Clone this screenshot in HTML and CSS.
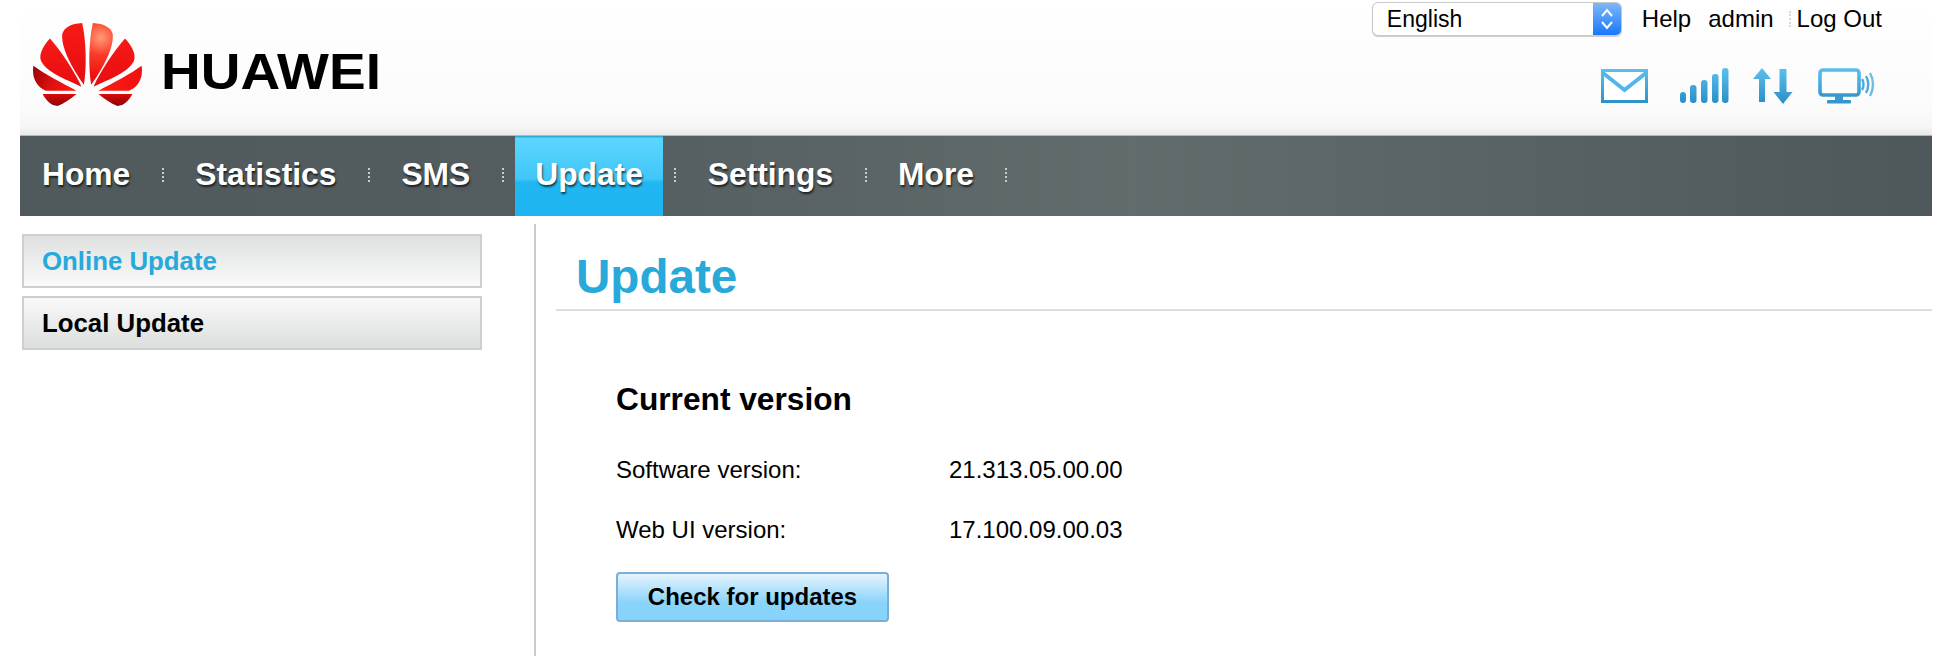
FILE: index.html
```html
<!DOCTYPE html>
<html lang="en">
<head>
  <meta charset="UTF-8">
  <title>Update</title>
  <link rel="stylesheet" href="styles.css">
</head>
<body>
  <div class="page">
    <header class="header">
      <div class="brand">
        <svg class="petals" viewBox="30 30 340 262" aria-hidden="true">
          <defs>
            <radialGradient id="petalA" gradientUnits="userSpaceOnUse" cx="240" cy="80" r="120">
              <stop offset="0" stop-color="#ff9c78"/>
              <stop offset=".45" stop-color="#fb3a26"/>
              <stop offset="1" stop-color="#ee1010"/>
            </radialGradient>
            <linearGradient id="petalB" x1="0" y1="0" x2="0" y2="1">
              <stop offset="0" stop-color="#f81a16"/>
              <stop offset="1" stop-color="#e60c10"/>
            </linearGradient>
            <linearGradient id="petalL" gradientUnits="userSpaceOnUse" x1="35" y1="190" x2="150" y2="225">
              <stop offset="0" stop-color="#9c0606"/>
              <stop offset=".5" stop-color="#e01010"/>
              <stop offset="1" stop-color="#f81414"/>
            </linearGradient>
            <linearGradient id="petalR" gradientUnits="userSpaceOnUse" x1="365" y1="190" x2="250" y2="225">
              <stop offset="0" stop-color="#f01010"/>
              <stop offset="1" stop-color="#fa1a14"/>
            </linearGradient>
            <linearGradient id="petalD" x1="0" y1="0" x2="0" y2="1">
              <stop offset="0" stop-color="#d80c0c"/>
              <stop offset="1" stop-color="#8c0404"/>
            </linearGradient>
          </defs>
          <path fill="url(#petalB)" d="M189 222C152 170 120 110 124 70C128 50 150 38 184 36C196 90 198 170 189 222Z"/>
          <path fill="url(#petalA)" d="M211 222C202 170 204 90 216 36C250 38 272 50 276 70C280 110 248 170 211 222Z"/>
          <path fill="url(#petalB)" d="M182 228C130 204 76 184 60 150C52 130 70 100 87 83C120 120 160 180 182 228Z"/>
          <path fill="url(#petalB)" d="M218 228C270 204 324 184 340 150C348 130 330 100 313 83C280 120 240 180 218 228Z"/>
          <path fill="url(#petalL)" d="M167 240C120 215 70 190 37 165C32 200 45 228 75 240Z"/>
          <path fill="url(#petalR)" d="M233 240C280 215 330 190 363 165C368 200 355 228 325 240Z"/>
          <path fill="url(#petalD)" d="M65 250L167 250C150 265 130 278 110 286C90 285 75 270 65 250Z"/>
          <path fill="url(#petalD)" d="M335 250L233 250C250 265 270 278 290 286C310 285 325 270 335 250Z"/>
        </svg>
        <span class="wordmark">HUAWEI</span>
      </div>
      <div class="header-right">
        <div class="top-links">
          <div class="lang-select">
            <span class="lang-value">English</span>
            <span class="lang-arrows">
              <svg width="14" height="24" viewBox="0 0 14 24" fill="none" stroke="#fff" stroke-width="2" aria-hidden="true">
                <path d="M2 9L7 3L12 9"/>
                <path d="M2 15L7 21L12 15"/>
              </svg>
            </span>
          </div>
          <a class="top-link link-help">Help</a>
          <a class="top-link link-admin">admin</a>
          <span class="top-sep"></span>
          <a class="top-link">Log Out</a>
        </div>
        <div class="status-icons">
          <svg class="icon" width="47" height="34" viewBox="0 0 47 34" fill="none" aria-hidden="true">
            <defs>
              <linearGradient id="iconBlue" gradientUnits="userSpaceOnUse" x1="0" y1="0" x2="0" y2="36">
                <stop offset="0" stop-color="#5cc0ee"/>
                <stop offset="1" stop-color="#2a8ec6"/>
              </linearGradient>
            </defs>
            <rect x="1.500" y="1.500" width="44" height="31" fill="#fff" stroke="url(#iconBlue)" stroke-width="3"/>
            <path d="M2 4L23.500 21L45 4" stroke="#52b6e8" stroke-width="4"/>
          </svg>
          <svg class="icon icon-signal" width="50" height="36" viewBox="0 0 50 36" aria-hidden="true">
            <rect x="1" y="24" width="6" height="11" rx="3" fill="url(#iconBlue)"/>
            <rect x="11" y="17" width="6.500" height="18" rx="3" fill="url(#iconBlue)"/>
            <rect x="22" y="12" width="6.500" height="23" rx="3" fill="url(#iconBlue)"/>
            <rect x="33" y="6" width="6.500" height="29" rx="3" fill="url(#iconBlue)"/>
            <rect x="43" y="0" width="6.500" height="35" rx="3" fill="url(#iconBlue)"/>
          </svg>
          <svg class="icon icon-arrows" width="40" height="36" viewBox="0 0 40 36" aria-hidden="true">
            <path fill="url(#iconBlue)" d="M9 0L18 11H12V34H6V11H0Z"/>
            <path fill="url(#iconBlue)" d="M30 36L39.500 24H33.500V1H26.500V24H20.500Z"/>
          </svg>
          <svg class="icon icon-screen" width="58" height="36" viewBox="0 0 58 36" fill="none" aria-hidden="true">
            <rect x="2" y="2" width="39" height="25" rx="3" stroke="url(#iconBlue)" stroke-width="3.600"/>
            <rect x="17" y="28" width="8" height="4" fill="#3a9ad0"/>
            <rect x="9" y="32" width="24" height="3.500" rx="1" fill="#3596cd"/>
            <path d="M44 11C46 14 46 19 44 22" stroke="#4aaadd" stroke-width="2.400"/>
            <path d="M48 8C51 13 51 20 48 25" stroke="#4aaadd" stroke-width="2.400"/>
            <path d="M52 5C56 12 56 21 52 28" stroke="#6cbce6" stroke-width="2.400"/>
          </svg>
        </div>
      </div>
    </header>

    <nav class="nav">
      <a class="nav-item">Home</a>
      <span class="nav-sep"></span>
      <a class="nav-item">Statistics</a>
      <span class="nav-sep"></span>
      <a class="nav-item">SMS</a>
      <span class="nav-sep"></span>
      <a class="nav-item active">Update</a>
      <span class="nav-sep"></span>
      <a class="nav-item">Settings</a>
      <span class="nav-sep"></span>
      <a class="nav-item">More</a>
      <span class="nav-sep"></span>
    </nav>

    <div class="main">
      <aside class="sidebar">
        <a class="side-item current">Online Update</a>
        <a class="side-item">Local Update</a>
      </aside>
      <section class="content">
        <h1 class="title">Update</h1>
        <div class="panel">
          <h2 class="panel-title">Current version</h2>
          <div class="info-row">
            <span class="info-label">Software version:</span>
            <span>21.313.05.00.00</span>
          </div>
          <div class="info-row">
            <span class="info-label">Web UI version:</span>
            <span>17.100.09.00.03</span>
          </div>
          <button class="check-btn">Check for updates</button>
        </div>
      </section>
    </div>
  </div>
</body>
</html>
```

FILE: styles.css
```css
html, body {
  height: 100%;
}

body {
  margin: 0;
  background: #fff;
  color: #000;
  font-family: "Liberation Sans", Arial, sans-serif;
  overflow: hidden;
}

.page {
  height: 656px;
  margin: 0 28px 0 20px;
  display: flex;
  flex-direction: column;
}

/* Top bar */
.header {
  height: 136px;
  box-sizing: border-box;
  display: flex;
  justify-content: space-between;
  background: linear-gradient(to bottom, #fff 0, #fbfbfb 80%, #f6f6f6 94%, #e8e8e8 100%);
  border-bottom: 1px solid #b4b8b8;
}

.brand {
  display: flex;
  align-items: flex-start;
  padding: 21px 0 0 11px;
}

.petals {
  width: 113px;
  height: 87px;
  filter: blur(.5px);
}

.wordmark {
  margin: 26px 0 0 17px;
  font-size: 50px;
  line-height: 50px;
  font-weight: bold;
  transform: scaleX(1.1);
  transform-origin: left center;
  filter: blur(.5px);
}

.header-right {
  display: flex;
  flex-direction: column;
  align-items: flex-start;
  padding-right: 50px;
}

.top-links {
  display: flex;
  align-items: center;
  height: 35px;
  margin-top: 1px;
  font-size: 24px;
}

.lang-select {
  display: flex;
  justify-content: space-between;
  width: 250px;
  height: 34px;
  box-sizing: border-box;
  border: 1px solid #c8c8c8;
  border-radius: 6px;
  box-shadow: 0 1px 1px rgba(0, 0, 0, .2);
  background: #fff;
  overflow: hidden;
  font-size: 23px;
}

.lang-value {
  padding-left: 14px;
  line-height: 32px;
}

.lang-arrows {
  display: flex;
  align-items: center;
  justify-content: center;
  width: 28px;
  background: linear-gradient(to bottom, #7fb8f8, #1877fb);
}

.top-link {
  color: #000;
}

.link-help {
  margin-left: 20px;
}

.link-admin {
  margin-left: 17px;
}

.top-sep {
  width: 0;
  height: 16px;
  margin: 0 6px 0 15px;
  border-left: 2px dotted #d8d8d8;
}

.status-icons {
  display: flex;
  align-items: flex-start;
  margin-top: 33px;
  margin-left: 229px;
}

.icon {
  display: block;
  flex: none;
  filter: blur(.5px);
}

.icon-signal {
  margin: -1px 0 0 31px;
}

.icon-arrows {
  margin: -1px 0 0 24px;
}

.icon-screen {
  margin: -1px 0 0 25px;
}

/* Main menu */
.nav {
  height: 80px;
  flex: none;
  display: flex;
  align-items: center;
  gap: 31.500px;
  padding-left: 22px;
  background: linear-gradient(to right, #50595b 0, #545d5f 30%, #616c6d 58%, #5a6466 75%, #4e5759 100%);
}

.nav-item {
  padding-bottom: 4px;
  color: #fff;
  font-size: 31.750px;
  font-weight: bold;
  text-shadow: 1px 2px 2px rgba(0, 0, 0, .65);
}

.nav-item.active {
  align-self: stretch;
  display: flex;
  align-items: center;
  margin: 0 -20px;
  padding: 0 20px 4px;
  background: linear-gradient(to bottom, #2a9ccb 0, #5bd6ff 3%, #40c6f8 54%, #20b6f1 58%, #1fb5f0 100%);
}

.nav-sep {
  width: 2px;
  height: 16px;
  background: repeating-linear-gradient(to bottom, #c8cccc 0 2px, transparent 2px 4px);
}

/* Below the menu */
.main {
  flex: 1;
  display: flex;
  min-height: 0;
}

.sidebar {
  flex: none;
  width: 514px;
  box-sizing: border-box;
  padding: 18px 0 0 2px;
}

.side-item {
  display: block;
  width: 460px;
  height: 54px;
  box-sizing: border-box;
  margin-bottom: 8px;
  padding-left: 18px;
  border: 2px solid #cdcfcf;
  background: linear-gradient(to bottom, #f9f9f9, #dcdede);
  font-size: 25.800px;
  font-weight: bold;
  line-height: 50px;
}

.side-item.current {
  background: linear-gradient(to bottom, #dfe1e1, #f9f9f9);
  color: #27a9dc;
}

.content {
  flex: 1;
  margin-top: 8px;
  padding-left: 20px;
  border-left: 2px solid #ccc;
}

.title {
  margin: 0;
  height: 87px;
  box-sizing: border-box;
  padding: 28px 0 0 20px;
  border-bottom: 2px solid #ddd;
  color: #27a9d9;
  font-size: 47.600px;
  line-height: 50px;
  font-weight: bold;
}

.panel {
  padding: 70px 0 0 60px;
}

.panel-title {
  margin: 0 0 39px;
  font-size: 31.700px;
  line-height: 36px;
  font-weight: bold;
}

.info-row {
  display: flex;
  height: 60px;
  font-size: 24px;
  line-height: 28px;
}

.info-label {
  width: 333px;
}

.check-btn {
  display: block;
  width: 273px;
  height: 50px;
  margin-top: -4px;
  padding: 0;
  border: 2px solid #79aed6;
  border-radius: 4px;
  background: linear-gradient(to bottom, #e6f4fd 0, #8ad4fb 62%, #88d3fb 100%);
  color: #000;
  font-family: inherit;
  font-size: 24px;
  font-weight: bold;
}
```
